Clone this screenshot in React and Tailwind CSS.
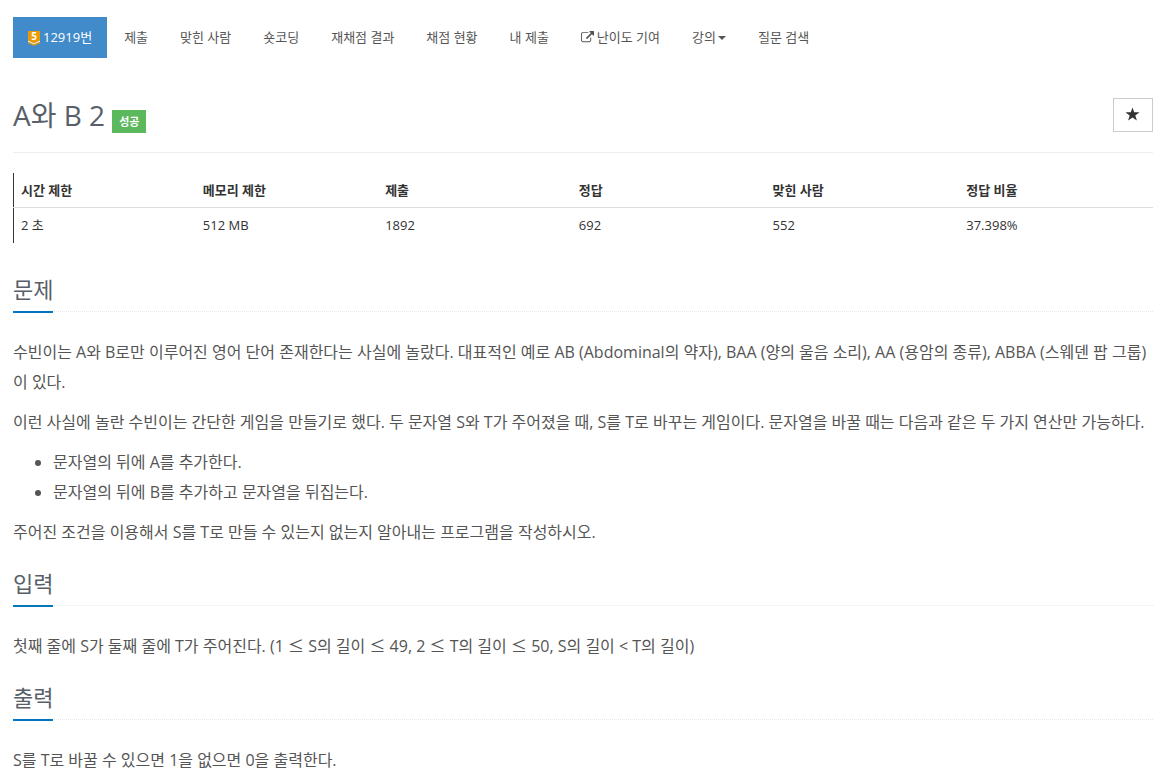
const menuItems = [
    { label: '제출' },
    { label: '맞힌 사람' },
    { label: '숏코딩' },
    { label: '재채점 결과' },
    { label: '채점 현황' },
    { label: '내 제출' },
    { label: '난이도 기여', external: true },
    { label: '강의', dropdown: true },
    { label: '질문 검색' },
];

const info = [
    { label: '시간 제한', value: '2 초', width: 'w-[16%]' },
    { label: '메모리 제한', value: '512 MB', width: 'w-[16%]' },
    { label: '제출', value: '1892', width: 'w-[17%]' },
    { label: '정답', value: '692', width: 'w-[17%]' },
    { label: '맞힌 사람', value: '552', width: 'w-[17%]' },
    { label: '정답 비율', value: '37.398%', width: 'w-[17%]' },
];

function TierIcon() {
    return (
        <svg className="h-4 w-3 shrink-0" viewBox="0 0 12 16" aria-hidden="true">
            <path d="M0 1h12v9.6L6 13.2 0 10.6z" fill="#ec9a00" />
            <path d="M0 10.6l6 2.6 6-2.6v1.4L6 14.6 0 12z" fill="#ffe9c4" />
            <path d="M0 12l6 2.6 6-2.6v1.2L6 15.8l-6-2.6z" fill="#ec9a00" />
            <text x="6" y="10" textAnchor="middle" fontSize="10" fontWeight="700" fill="#fff">5</text>
        </svg>
    );
}

function ExternalIcon() {
    return (
        <svg className="h-[13px] w-[13px] shrink-0" viewBox="0 0 1792 1792" fill="currentColor" aria-hidden="true">
            <path d="M1408 928v320q0 119-84.5 203.5t-203.5 84.5h-832q-119 0-203.5-84.5t-84.5-203.5v-832q0-119 84.5-203.5t203.5-84.5h704q14 0 23 9t9 23v64q0 14-9 23t-23 9h-704q-66 0-113 47t-47 113v832q0 66 47 113t113 47h832q66 0 113-47t47-113v-320q0-14 9-23t23-9h64q14 0 23 9t9 23zM1792 64v512q0 26-19 45t-45 19-45-19l-176-176-652 652q-10 10-23 10t-23-10l-114-114q-10-10-10-23t10-23l652-652-176-176q-19-19-19-45t19-45 45-19h512q26 0 45 19t19 45z" />
        </svg>
    );
}

function StarIcon() {
    return (
        <svg className="h-[14px] w-[14px]" viewBox="0 0 14 14" fill="currentColor" aria-hidden="true">
            <path d="M6.5 -.5l1.7 4.8h5.3L9.3 7.4l1.6 5.1-4.4-3.1-4.4 3.1 1.6-5.1L-.5 4.3h5.3z" />
        </svg>
    );
}

function ProblemMenu() {
    return (
        <nav>
            <ul className="flex flex-wrap gap-[2px] text-[13px] leading-[21px]">
                <li>
                    <a href="#" className="flex items-center gap-[3px] bg-[#428bca] px-[15px] py-[10px] text-white">
                        <TierIcon />
                        12919번
                    </a>
                </li>
                {menuItems.map((item) => (
                    <li key={item.label}>
                        <a href="#" className="flex items-center gap-[3px] px-[15px] py-[10px] text-[#555]">
                            {item.external && <ExternalIcon />}
                            {item.label}
                            {item.dropdown && (
                                <span className="-ml-px border-x-4 border-t-4 border-x-transparent border-t-[#555]" />
                            )}
                        </a>
                    </li>
                ))}
            </ul>
        </nav>
    );
}

function Section({ title, children }) {
    return (
        <section>
            <div className="mb-[25px] border-b border-dotted border-[#e4e9f0]">
                <h2 className="-mb-[2px] inline-block border-b-2 border-[#0076c0] pb-[5px] align-top text-[22px] leading-[33px] text-[#585f69]">
                    {title}
                </h2>
            </div>
            <div className="flex flex-col gap-[10px] text-[16px] leading-[30px] text-[#555]">{children}</div>
        </section>
    );
}

// The Open Sans glyph is narrow, so the sign is taken from the Korean face
function Leq() {
    return <span className="font-['Noto_Sans_CJK_KR',sans-serif] leading-none">≤</span>;
}

export default function App() {
    return (
        <main className="bg-white pt-[17px] pr-[17px] pb-[10px] pl-[13px] font-['Open_Sans','Noto_Sans_CJK_KR',sans-serif] text-[#333]">
            <ProblemMenu />

            <header className="mt-[40px] flex items-start justify-between border-b border-[#eee] pb-[19px]">
                <h1 className="flex items-end gap-[7px] text-[28px] leading-[35px] text-[#585f69]">
                    A와 B 2
                    <span className="bg-[#5cb85c] px-[7px] text-[11px] leading-[23px] font-bold text-white">성공</span>
                </h1>
                <button
                    type="button"
                    aria-label="즐겨찾기"
                    className="flex h-[34px] w-[40px] items-center justify-center border border-[#ccc] bg-white text-[#333]"
                >
                    <StarIcon />
                </button>
            </header>

            <table className="mt-[20px] w-full table-fixed border-l border-[#333] text-left text-[13px] leading-[18px]">
                <thead>
                    <tr className="border-b border-[#ddd]">
                        {info.map((col) => (
                            <th key={col.label} className={`${col.width} px-[7px] py-[8px] font-bold`}>{col.label}</th>
                        ))}
                    </tr>
                </thead>
                <tbody>
                    <tr>
                        {info.map((col) => (
                            <td key={col.label} className="px-[7px] pt-[8px] pb-[9px]">{col.value}</td>
                        ))}
                    </tr>
                </tbody>
            </table>

            <div className="mt-[30px] flex flex-col gap-[20px]">
                <Section title="문제">
                    <p>
                        수빈이는 A와 B로만 이루어진 영어 단어 존재한다는 사실에 놀랐다. 대표적인 예로 AB (Abdominal의 약자), BAA (양의 울음 소리), AA (용암의 종류), ABBA (스웨덴 팝 그룹)이 있다.
                    </p>
                    <p>
                        이런 사실에 놀란 수빈이는 간단한 게임을 만들기로 했다. 두 문자열 S와 T가 주어졌을 때, S를 T로 바꾸는 게임이다. 문자열을 바꿀 때는 다음과 같은 두 가지 연산만 가능하다.
                    </p>
                    <ul className="list-disc pl-[40px]">
                        <li>문자열의 뒤에 A를 추가한다.</li>
                        <li>문자열의 뒤에 B를 추가하고 문자열을 뒤집는다.</li>
                    </ul>
                    <p>주어진 조건을 이용해서 S를 T로 만들 수 있는지 없는지 알아내는 프로그램을 작성하시오.</p>
                </Section>

                <Section title="입력">
                    <p>
                        첫째 줄에 S가 둘째 줄에 T가 주어진다. (1 <Leq /> S의 길이 <Leq /> 49, 2 <Leq /> T의 길이 <Leq /> 50, S의 길이 &lt; T의 길이)
                    </p>
                </Section>

                <Section title="출력">
                    <p>S를 T로 바꿀 수 있으면 1을 없으면 0을 출력한다.</p>
                </Section>
            </div>
        </main>
    );
}
